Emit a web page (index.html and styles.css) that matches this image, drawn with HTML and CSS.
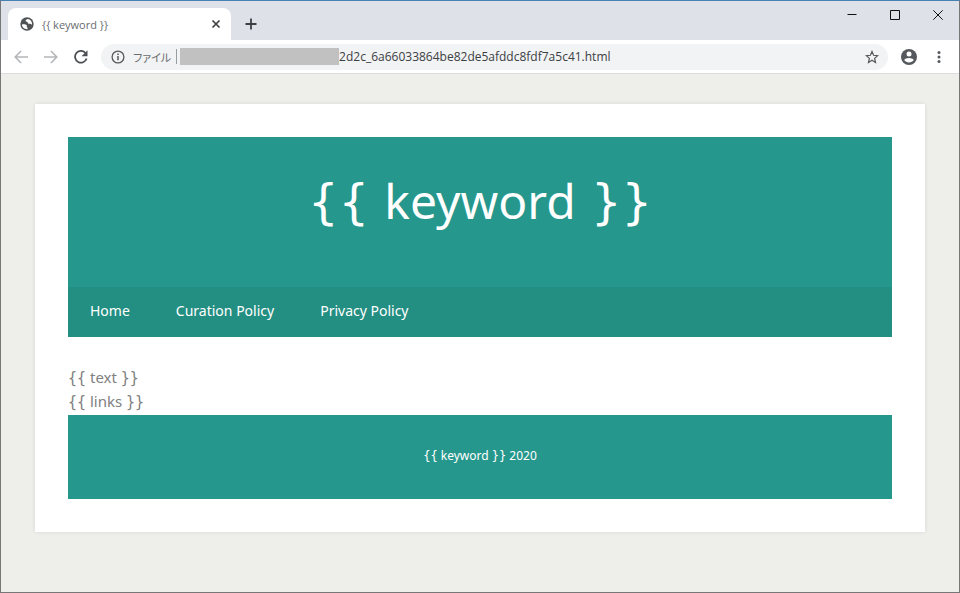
FILE: index.html
```html
<!DOCTYPE html>
<html lang="ja">
<head>
<meta charset="utf-8">
<title>{{ keyword }}</title>
<link rel="stylesheet" href="styles.css">
</head>
<body>
<div class="window">
  <div class="tab-strip">
    <div class="tab">
      <svg class="tab-icon" viewBox="0 0 24 24" aria-hidden="true"><circle cx="12" cy="12" r="11.5" fill="#505356"/><path d="M3.5 12.5c3 .2 6-.5 8 1.500 1 1.300-.6 2.500.3 3.600 1.400.7 1.500 1.800 1 3.400C7 21 3 17.500 3.500 12.500zM13 3.500c-1.500 1-3.800 1.400-3.300 3.200.8 1.700 3.300.8 3.500 2.800.2 2 2.200 2.600 4 2 1.400-.3 2.200 1.300 3.500 1.500C21 8 18 4 13 3.500z" fill="#fff"/></svg>
      <span class="tab-title">{{ keyword }}</span>
      <button class="icon-button tab-close" aria-label="Close tab"><svg width="10" height="10" viewBox="0 0 10 10"><path d="M1.500 1.500l7 7M8.500 1.500l-7 7" stroke="#3c4043" stroke-width="1.700"/></svg></button>
    </div>
    <button class="icon-button new-tab" aria-label="New tab"><svg width="12" height="12" viewBox="0 0 12 12"><path d="M6 .5v11M.5 6h11" stroke="#3c4043" stroke-width="1.800"/></svg></button>
    <div class="window-controls">
      <button class="icon-button" aria-label="Minimize"><svg width="10" height="10" viewBox="0 0 10 10"><path d="M.5 4.500h9" stroke="#111" stroke-width="1"/></svg></button>
      <button class="icon-button" aria-label="Maximize"><svg width="10" height="10" viewBox="0 0 10 10"><path d="M.5.5h9v9h-9z" fill="none" stroke="#111"/></svg></button>
      <button class="icon-button" aria-label="Close"><svg width="10" height="10" viewBox="0 0 10 10"><path d="M.3.3l9.400 9.400M9.700.3L.3 9.700" stroke="#111"/></svg></button>
    </div>
  </div>
  <div class="toolbar">
    <button class="icon-button nav-button" aria-label="Back"><svg width="14" height="14" viewBox="0 0 14 14"><path d="M14 7H1.500M7 1L1.200 7 7 13" fill="none" stroke="#b4b6b9" stroke-width="1.600"/></svg></button>
    <button class="icon-button nav-button" aria-label="Forward"><svg width="14" height="14" viewBox="0 0 14 14"><path d="M0 7h12.500M7 1l5.800 6L7 13" fill="none" stroke="#b4b6b9" stroke-width="1.600"/></svg></button>
    <button class="icon-button nav-button" aria-label="Reload"><svg width="14" height="14" viewBox="0 0 14 14"><path d="M12.600 8.500A5.900 5.900 0 1 1 11.500 3" fill="none" stroke="#4c5054" stroke-width="1.800"/><path d="M13.500.3v5.900H7.600z" fill="#4c5054"/></svg></button>
    <div class="omnibox">
      <svg width="14" height="14" viewBox="0 0 14 14" aria-hidden="true"><circle cx="7" cy="7" r="5.900" fill="none" stroke="#55585c" stroke-width="1.300"/><path d="M7 6v4.300M7 3.500v1.500" stroke="#55585c" stroke-width="1.500"/></svg>
      <label class="scheme" for="address">ファイル</label>
      <span class="divider"></span>
      <span class="redacted"></span>
      <input class="address" id="address" type="text" value="2d2c_6a66033864be82de5afddc8fdf7a5c41.html">
      <button class="icon-button" aria-label="Bookmark"><svg width="14" height="14" viewBox="0 0 14 14"><path d="M7 1.600l1.600 3.700 4 .4-3 2.700.9 4L7 10.300l-3.500 2.100.9-4-3-2.700 4-.4z" fill="none" stroke="#55585c" stroke-width="1.200"/></svg></button>
    </div>
    <button class="icon-button profile" aria-label="Profile"><svg width="16" height="16" viewBox="0 0 16 16"><circle cx="8" cy="8" r="8" fill="#55585c"/><circle cx="8" cy="5" r="2.500" fill="#fff"/><path d="M3.200 11c1-2.700 8.600-2.700 9.600 0-2 3.200-7.600 3.200-9.600 0z" fill="#fff"/></svg></button>
    <button class="icon-button menu" aria-label="Menu"><svg width="4" height="14" viewBox="0 0 4 14"><g fill="#55585c"><circle cx="2" cy="2.500" r="1.500"/><circle cx="2" cy="7" r="1.500"/><circle cx="2" cy="11.500" r="1.500"/></g></svg></button>
  </div>
  <div class="viewport">
    <div class="page">
      <header class="site-header">
        <h1 class="site-title"><span class="brace-wide">{{ </span>keyword<span class="brace-wide"> }}</span></h1>
        <nav class="site-nav">
          <a href="#">Home</a>
          <a href="#">Curation Policy</a>
          <a href="#">Privacy Policy</a>
        </nav>
      </header>
      <main class="content">
        <p><span class="brace">{{</span> text <span class="brace">}}</span></p>
        <p><span class="brace">{{</span> links <span class="brace">}}</span></p>
      </main>
      <footer class="site-footer"><span class="brace">{{</span> keyword <span class="brace">}}</span> 2020</footer>
    </div>
  </div>
</div>
</body>
</html>
```
FILE: styles.css
```css
* {
  box-sizing: border-box;
}

body {
  margin: 0;
  font-family: "Noto Sans", "Noto Sans CJK JP", sans-serif;
}

.window {
  display: flex;
  flex-direction: column;
  min-height: 100vh;
  border: 1px solid #777;
  border-top-color: #4682b4;
}

.icon-button {
  display: flex;
  align-items: center;
  justify-content: center;
  padding: 0;
  border: 0;
  background: none;
}

.tab-strip {
  display: flex;
  height: 39px;
  padding-left: 7px;
  background: #dee1e7;
}

.tab {
  display: flex;
  align-items: center;
  width: 223px;
  margin-top: 7px;
  padding: 0 10px 0 12px;
  border-radius: 8px 8px 0 0;
  background: #fff;
}

.tab-icon {
  width: 14px;
  height: 14px;
}

.tab-title {
  flex: 1;
  margin-left: 8px;
  color: #6a6d70;
  font-family: "Open Sans", sans-serif;
  font-size: 11px;
}

.new-tab {
  width: 40px;
  margin-top: 7px;
}

.window-controls {
  display: flex;
  height: 27px;
  margin-left: auto;
}

.window-controls .icon-button {
  width: 43px;
}

.toolbar {
  display: flex;
  align-items: center;
  height: 34px;
  padding: 0 18px 0 5px;
  border-bottom: 1px solid #dcdcda;
  background: #fff;
}

.nav-button {
  width: 30px;
  height: 26px;
}

.omnibox {
  display: flex;
  flex: 1;
  align-items: center;
  height: 26px;
  margin-left: 5px;
  padding: 0 9px 0 10px;
  border-radius: 13px;
  background: #f1f3f4;
}

.scheme {
  margin-left: 8px;
  color: #6a6d70;
  font-family: "Noto Sans CJK JP", sans-serif;
  font-size: 11px;
  font-feature-settings: "palt";
}

.divider {
  width: 1px;
  height: 15px;
  margin: 0 3px 0 5px;
  background: #9a9c9e;
}

.redacted {
  width: 159px;
  height: 17px;
  background: #c1c1c1;
}

.address {
  flex: 1;
  min-width: 0;
  padding: 0;
  border: 0;
  outline: 0;
  background: none;
  color: #3c4043;
  font-family: "Open Sans", sans-serif;
  font-size: 12px;
}

.profile {
  margin-left: 13px;
}

.menu {
  width: 4px;
  margin-left: 20px;
}

.viewport {
  flex: 1;
  padding: 30px 34px;
  background: #eeeeea;
}

.page {
  padding: 33px;
  background: #fff;
  box-shadow: 0 0 4px rgba(0, 0, 0, 0.1);
}

.brace,
.brace-wide {
  line-height: 1;
}

.brace {
  font-family: "DejaVu Sans Mono", monospace;
}

.brace-wide {
  font-family: "DejaVu Sans", sans-serif;
}

.site-header {
  background: #26978c;
  color: #fff;
}

.site-title {
  margin: 0;
  padding: 32px 20px 54px;
  font-size: 48px;
  font-weight: 400;
  line-height: 64px;
  text-align: center;
}

.site-nav {
  display: flex;
  flex-wrap: wrap;
  gap: 46px;
  padding: 0 22px 2px;
  background: #238e82;
}

.site-nav a {
  color: #fff;
  font-size: 14px;
  line-height: 48px;
  text-decoration: none;
}

.content {
  padding: 28px 0 2px;
  color: #808080;
  font-size: 15px;
  line-height: 24px;
}

.content p {
  margin: 0;
}

.site-footer {
  padding: 29px 20px 31px;
  background: #26978c;
  color: #fff;
  font-size: 12px;
  line-height: 24px;
  text-align: center;
}
```
